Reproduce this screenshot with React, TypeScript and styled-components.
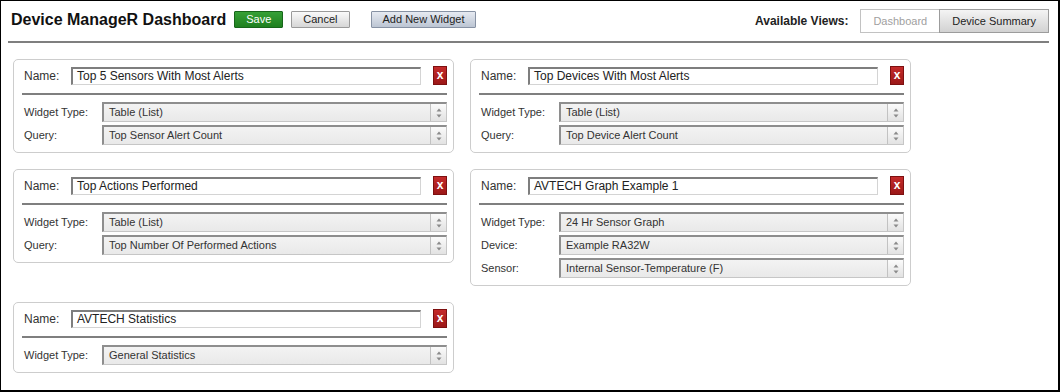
import styled, { createGlobalStyle, css } from 'styled-components'

const GlobalStyle = createGlobalStyle`
  html, body {
    margin: 0;
    padding: 0;
    background: #fff;
  }
  body {
    font-family: 'Liberation Sans', Arial, sans-serif;
    color: #333;
  }
`

type Widget = {
  name: string
  fields: { label: string; value: string }[]
}

const widgets: Widget[] = [
  {
    name: 'Top 5 Sensors With Most Alerts',
    fields: [
      { label: 'Widget Type:', value: 'Table (List)' },
      { label: 'Query:', value: 'Top Sensor Alert Count' },
    ],
  },
  {
    name: 'Top Devices With Most Alerts',
    fields: [
      { label: 'Widget Type:', value: 'Table (List)' },
      { label: 'Query:', value: 'Top Device Alert Count' },
    ],
  },
  {
    name: 'Top Actions Performed',
    fields: [
      { label: 'Widget Type:', value: 'Table (List)' },
      { label: 'Query:', value: 'Top Number Of Performed Actions' },
    ],
  },
  {
    name: 'AVTECH Graph Example 1',
    fields: [
      { label: 'Widget Type:', value: '24 Hr Sensor Graph' },
      { label: 'Device:', value: 'Example RA32W' },
      { label: 'Sensor:', value: 'Internal Sensor-Temperature (F)' },
    ],
  },
  {
    name: 'AVTECH Statistics',
    fields: [{ label: 'Widget Type:', value: 'General Statistics' }],
  },
]

const Page = styled.div`
  box-sizing: border-box;
  width: 1060px;
  height: 392px;
  border-style: solid;
  border-color: #000;
  border-width: 1px 2px 2px 1px;
  overflow: hidden;
`

const Header = styled.div`
  display: flex;
  align-items: center;
  height: 40px;
  padding: 0 9px 3px 10px;
  box-sizing: border-box;
`

const Title = styled.h1`
  margin: 0 8px 0 0;
  font-size: 16px;
  font-weight: bold;
  color: #111;
`

const buttonVariants = {
  save: css`
    background: linear-gradient(#36a036, #1f801f);
    border-color: #17661a;
    color: #fff;
  `,
  plain: css`
    background: linear-gradient(#fafafa, #d6d6d6);
    border-color: #9a9a9a;
    color: #222;
  `,
  add: css`
    background: linear-gradient(#e6eaf1, #bcc5d3);
    border-color: #8792a4;
    color: #222;
  `,
}

const ActionButton = styled.button<{ $variant: keyof typeof buttonVariants; $gap?: number }>`
  height: 17px;
  padding: 0 11px;
  margin-right: ${(p) => p.$gap ?? 8}px;
  border: 1px solid;
  border-radius: 1px;
  font-family: inherit;
  font-size: 11px;
  line-height: 15px;
  cursor: pointer;
  ${(p) => buttonVariants[p.$variant]}
`

const Spacer = styled.div`
  flex: 1;
`

const ViewsLabel = styled.span`
  font-size: 12px;
  font-weight: bold;
  color: #222;
  margin: 2px 12px 0 0;
`

const ViewTabs = styled.div`
  display: flex;
  margin-top: 3px;
`

const ViewTab = styled.button<{ $current?: boolean }>`
  height: 24px;
  padding: 0 12px;
  border: 1px solid ${(p) => (p.$current ? '#c2c2c2' : '#9c9c9c')};
  font-family: inherit;
  font-size: 11px;
  color: ${(p) => (p.$current ? '#a0a0a0' : '#222')};
  background: ${(p) => (p.$current ? '#fff' : 'linear-gradient(#f4f4f4, #d2d2d2)')};
  cursor: pointer;
  & + & {
    margin-left: -1px;
  }
`

const Rule = styled.hr`
  margin: 0 9px 0 7px;
  border: 0;
  height: 2px;
  background: #7f7f7f;
`

const Grid = styled.div`
  display: flex;
  flex-wrap: wrap;
  align-items: flex-start;
  gap: 16px;
  padding: 16px 0 0 12px;
`

const Card = styled.div`
  box-sizing: border-box;
  width: 441px;
  padding: 6px 6px 7px 8px;
  border: 1px solid #cdcdcd;
  border-radius: 5px;
  background: #fff;
`

const NameRow = styled.div`
  display: flex;
  align-items: center;
  height: 19px;
`

const NameLabel = styled.label`
  width: 47px;
  margin-left: 2px;
  font-size: 12px;
  color: #333;
`

const NameInput = styled.div`
  box-sizing: border-box;
  width: 350px;
  height: 18px;
  padding: 0 4px;
  border-style: solid;
  border-width: 2px 1px 1px 2px;
  border-color: #7e7e7e #d4d4d4 #d4d4d4 #7e7e7e;
  font-size: 12px;
  line-height: 15px;
  color: #222;
  white-space: nowrap;
  overflow: hidden;
`

const RemoveButton = styled.button`
  box-sizing: border-box;
  width: 14px;
  height: 19px;
  margin-left: 12px;
  padding: 0;
  border: 1px solid #7d1010;
  background: linear-gradient(#c42a2a, #9c1818);
  color: #fff;
  font-family: inherit;
  font-size: 12px;
  font-weight: bold;
  line-height: 15px;
  cursor: pointer;
`

const Divider = styled.div`
  height: 2px;
  margin: 8px 0 7px;
  background: #7f7f7f;
`

const Fields = styled.div`
  display: flex;
  flex-direction: column;
  gap: 3px;
`

const FieldRow = styled.div`
  display: flex;
  align-items: center;
`

const FieldLabel = styled.span`
  width: 78px;
  margin-left: 2px;
  font-size: 11px;
  color: #333;
`

const Select = styled.div`
  box-sizing: border-box;
  display: flex;
  align-items: stretch;
  width: 345px;
  height: 20px;
  border-style: solid;
  border-width: 2px 1px 1px 2px;
  border-color: #8e8e8e #c6c6c6 #c6c6c6 #8e8e8e;
  background: linear-gradient(#f3f3f3, #e9e9e9);
`

const SelectValue = styled.span`
  flex: 1;
  padding-left: 5px;
  font-size: 11px;
  line-height: 17px;
  color: #333;
  white-space: nowrap;
`

const Spinner = styled.span`
  width: 15px;
  display: flex;
  align-items: center;
  justify-content: center;
  border-left: 1px solid #c2c2c2;
  background: linear-gradient(#fbfbfb, #e2e2e2);
`

function SpinnerArrows() {
  return (
    <svg width="6" height="10" viewBox="0 0 6 10">
      <path d="M3 0.5 L5.5 3.5 L0.5 3.5 Z" fill="#8a8a8a" />
      <path d="M3 9.5 L5.5 6.5 L0.5 6.5 Z" fill="#8a8a8a" />
    </svg>
  )
}

function WidgetCard({ widget }: { widget: Widget }) {
  return (
    <Card>
      <NameRow>
        <NameLabel>Name:</NameLabel>
        <NameInput>{widget.name}</NameInput>
        <RemoveButton>x</RemoveButton>
      </NameRow>
      <Divider />
      <Fields>
        {widget.fields.map((f) => (
          <FieldRow key={f.label}>
            <FieldLabel>{f.label}</FieldLabel>
            <Select>
              <SelectValue>{f.value}</SelectValue>
              <Spinner>
                <SpinnerArrows />
              </Spinner>
            </Select>
          </FieldRow>
        ))}
      </Fields>
    </Card>
  )
}

export default function App() {
  return (
    <>
      <GlobalStyle />
      <Page>
        <Header>
          <Title>Device ManageR Dashboard</Title>
          <ActionButton $variant="save">Save</ActionButton>
          <ActionButton $variant="plain" $gap={21}>
            Cancel
          </ActionButton>
          <ActionButton $variant="add">Add New Widget</ActionButton>
          <Spacer />
          <ViewsLabel>Available Views:</ViewsLabel>
          <ViewTabs>
            <ViewTab $current>Dashboard</ViewTab>
            <ViewTab>Device Summary</ViewTab>
          </ViewTabs>
        </Header>
        <Rule />
        <Grid>
          {widgets.map((w) => (
            <WidgetCard key={w.name} widget={w} />
          ))}
        </Grid>
      </Page>
    </>
  )
}
